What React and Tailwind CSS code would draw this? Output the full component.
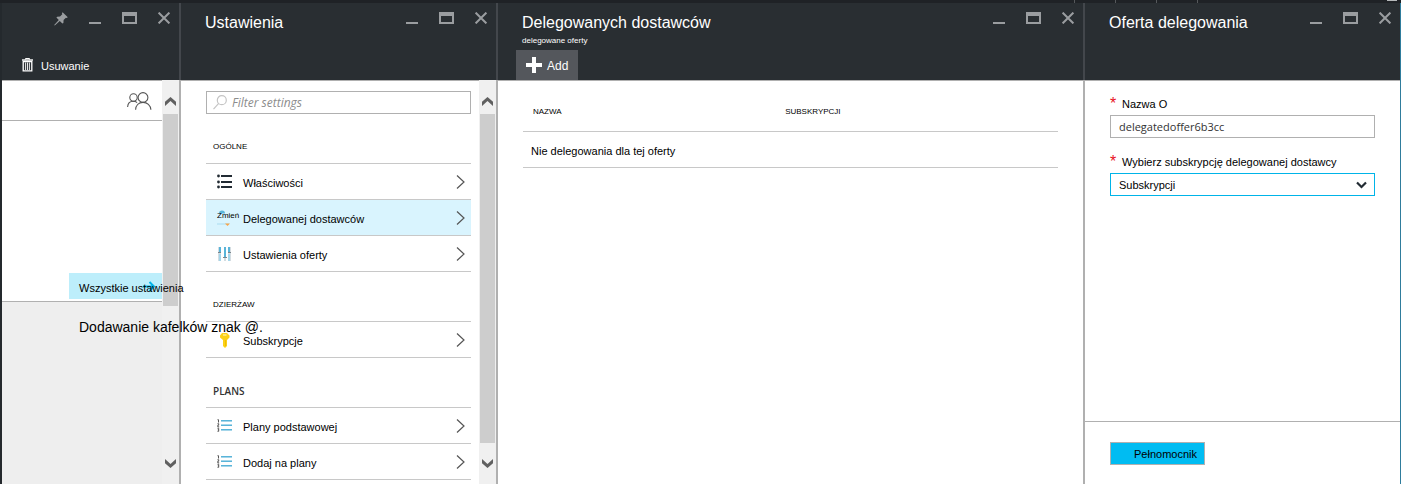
import React from "react";

const PinIcon = () => (
  <svg width="14" height="14" viewBox="0 0 14 14" fill="currentColor" aria-hidden="true">
    <path d="M8.6 0.2 13.8 5.2 12.6 6 11.9 5.7 9.6 8.1 9.4 10.9 8.4 11.6 5.8 9 0.8 13.6 0.2 13.1 4.8 8 2.4 5.6 3.2 4.7 6 4.5 8.3 2.2 7.9 1.2z" />
  </svg>
);

const MinimizeIcon = () => (
  <svg width="12" height="12" viewBox="0 0 12 12" aria-hidden="true">
    <rect x="0" y="10" width="12" height="2" fill="currentColor" />
  </svg>
);

const MaximizeIcon = () => (
  <svg width="15" height="12" viewBox="0 0 15 12" aria-hidden="true">
    <path d="M0 0h15v12H0zM2 4v6h11V4z" fill="currentColor" fillRule="evenodd" />
  </svg>
);

const CloseIcon = () => (
  <svg width="12" height="12" viewBox="0 0 12 12" aria-hidden="true">
    <path d="M0.6 0.6 11.4 11.4M11.4 0.6 0.6 11.4" stroke="currentColor" strokeWidth="2" fill="none" />
  </svg>
);

const TrashIcon = () => (
  <svg width="11" height="14" viewBox="0 0 11 14" fill="none" stroke="#fff" aria-hidden="true">
    <path d="M0 2h11" strokeWidth="1.4" />
    <path d="M3.5 1.5v-1h4v1" />
    <path d="M1.2 3.5h8.6v9.3H1.2z" strokeWidth="1.3" />
    <path d="M3.6 4.5v7.5M5.5 4.5v7.5M7.4 4.5v7.5" strokeWidth="0.9" />
  </svg>
);

const PlusIcon = () => (
  <svg width="16" height="16" viewBox="0 0 16 16" aria-hidden="true">
    <path d="M6 0h4v6h6v4h-6v6H6v-6H0V6h6z" fill="#fff" />
  </svg>
);

const PeopleIcon = () => (
  <svg width="25" height="18" viewBox="0 0 25 18" fill="none" stroke="#555" strokeWidth="1.1" aria-hidden="true">
    <circle cx="6.5" cy="5.5" r="3.7" />
    <path d="M0.6 15C0.8 11.5 3 9.3 6.3 9.3c1.6 0 2.7.4 3.8 1.3" />
    <circle cx="16" cy="5.5" r="4.9" />
    <path d="M8.6 17.8c.2-4.6 3.2-7.4 7.4-7.4s7.6 2.8 7.9 7.4" />
  </svg>
);

const SearchIcon = () => (
  <svg width="14" height="15" viewBox="0 0 14 15" fill="none" stroke="#c4c4c4" strokeWidth="1.2" aria-hidden="true">
    <circle cx="8.8" cy="5.2" r="4.5" />
    <path d="M5.7 8.4 0.5 14.2" />
  </svg>
);

const RowChevron = () => (
  <svg width="9" height="14" viewBox="0 0 9 14" fill="none" stroke="#555" strokeWidth="1.2" aria-hidden="true">
    <path d="M1 0.5 8 7 1 13.5" />
  </svg>
);

const ScrollChevron = ({ down }) => (
  <svg width="11" height="9" viewBox="0 0 11 9" aria-hidden="true">
    <path
      d={down ? "M0 0 5.5 5 11 0V4.2L5.5 9 0 4.2z" : "M0 9 5.5 4 11 9V4.8L5.5 0 0 4.8z"}
      fill="#606060"
    />
  </svg>
);

const BulletsIcon = () => (
  <svg width="16" height="15" viewBox="0 0 16 15" fill="#222b33" aria-hidden="true">
    <circle cx="1.5" cy="2" r="1.4" />
    <circle cx="1.5" cy="8" r="1.4" />
    <circle cx="1.5" cy="13" r="1.4" />
    <path d="M4 1h11v2H4zM4 7h11v2H4zM4 12h11v2H4z" />
  </svg>
);

const ProviderIcon = () => (
  <svg width="16" height="16" viewBox="0 0 16 16" aria-hidden="true">
    <path d="M2 3.5a3 3 0 0 1 6 0z" fill="#59b4d9" />
    <path d="M0 14h12" stroke="#a9dcf0" />
    <path d="M8 13.5h5l-2.5 2.5z" fill="#f7a44a" />
  </svg>
);

const SlidersIcon = () => (
  <svg width="16" height="16" viewBox="0 0 16 16" aria-hidden="true">
    <path d="M1 1h3v14H1zM7 1h2v14H7zM11 1h3v14h-3z" fill="#d4dde2" />
    <path d="M2 8h2v7H2zM11 8h2v7h-2z" fill="#a5d6ea" />
    <path d="M2 1h2v5H2zM7 1h2v10H7zM11 1h2v5h-2z" fill="#59b4d9" />
    <path d="M1 6h3v1H1zM6 11h4v1H6zM11 6h3v1h-3z" fill="#7a858c" />
  </svg>
);

const KeyIcon = () => (
  <svg width="16" height="16" viewBox="0 0 16 16" aria-hidden="true">
    <path d="M5 1h5l2.5 2.5v2L10 8v6l-2 2-2-2V8L3 5.5v-2z" fill="#fcd116" />
    <path d="M6 3h3.5" stroke="#fff3b0" strokeWidth="1.2" />
    <path d="M8.5 8v6" stroke="#e8b800" strokeWidth="0.8" />
  </svg>
);

const NumberedIcon = () => (
  <svg width="16" height="13" viewBox="0 0 16 13" aria-hidden="true">
    <path
      d="M0.5 0.7h1v2.800M0.5 4.700h1.200v1.500H0.800v1.700H2.200M0.500 9.300h1.200v3H0.500M0.800 10.800h1"
      stroke="#555"
      fill="none"
    />
    <path d="M4 1h11v1H4zM4 6h11v1H4zM4 10h11v1H4z" fill="#59b4d9" />
    <path d="M4 2h11v1H4zM4 5h11v1H4zM4 11h11v1H4z" fill="#a5d6ea" />
  </svg>
);

function WindowControls({ pin }) {
  return (
    <div className="flex shrink-0 items-start gap-[21px] pt-[9px] text-[#9a9da0]">
      {pin && (
        <button type="button" aria-label="Przypnij">
          <PinIcon />
        </button>
      )}
      <button type="button" aria-label="Minimalizuj">
        <MinimizeIcon />
      </button>
      <button type="button" aria-label="Maksymalizuj">
        <MaximizeIcon />
      </button>
      <button type="button" aria-label="Zamknij">
        <CloseIcon />
      </button>
    </div>
  );
}

function Blade({ title, subtitle, command, pin, last, className, children }) {
  return (
    <section className={`flex flex-col ${className}`}>
      <header
        className={`flex h-[77px] shrink-0 flex-col justify-between bg-[#292e32] text-white ${
          last ? "" : "border-r-2 border-[#43474c]"
        }`}
      >
        <div className="flex justify-between pr-[9px]">
          <div className="pl-6">
            {title && <h2 className="pt-2.5 text-base leading-5 whitespace-nowrap">{title}</h2>}
            {subtitle && <p className="text-[8px] leading-4">{subtitle}</p>}
          </div>
          <WindowControls pin={pin} />
        </div>
        {command}
      </header>
      <div className={`flex flex-1 ${last ? "" : "border-r-2 border-[#b0b0b0]"}`}>{children}</div>
    </section>
  );
}

function Scrollbar({ thumb }) {
  return (
    <div className="flex w-[17px] shrink-0 flex-col bg-[#f0f0f0]">
      <button type="button" aria-label="Przewiń w górę" className="flex h-[34px] items-center justify-center pt-2">
        <ScrollChevron />
      </button>
      <div className={`mx-px bg-[#cdcdcd] ${thumb}`} />
      <button
        type="button"
        aria-label="Przewiń w dół"
        className="mt-auto flex h-[41px] items-center justify-center"
      >
        <ScrollChevron down />
      </button>
    </div>
  );
}

const groups = [
  {
    title: "OGÓLNE",
    items: [
      { label: "Właściwości", Icon: BulletsIcon },
      { label: "Delegowanej dostawców", Icon: ProviderIcon, active: true, tag: "Zmień" },
      { label: "Ustawienia oferty", Icon: SlidersIcon },
    ],
  },
  { title: "DZIERŻAW", items: [{ label: "Subskrypcje", Icon: KeyIcon }] },
  {
    title: "PLANS",
    semibold: true,
    items: [
      { label: "Plany podstawowej", Icon: NumberedIcon },
      { label: "Dodaj na plany", Icon: NumberedIcon },
    ],
  },
];

function SettingsRow({ label, Icon, active, tag }) {
  return (
    <li>
      <a
        href="#"
        className={`flex h-9 items-center border-b border-[#c8c8c8] pr-1.5 pl-[11px] ${active ? "bg-[#d9f4fe]" : ""}`}
      >
        <span className="relative flex w-[26px] shrink-0">
          <Icon />
          {tag && <span className="absolute top-0 left-0 text-[8px] leading-3">{tag}</span>}
        </span>
        <span className="flex-1 pt-0.5 leading-4">{label}</span>
        <RowChevron />
      </a>
    </li>
  );
}

function Field({ id, label, children }) {
  return (
    <div className="flex flex-col gap-[3px]">
      <label htmlFor={id} className="flex leading-4 whitespace-nowrap">
        <span className="w-3 text-base leading-4 text-[#e81123]">*</span>
        {label}
      </label>
      {children}
    </div>
  );
}

export default function App() {
  return (
    <div className="flex min-h-screen flex-col bg-[#1f2327] font-['Liberation_Sans',Arial,sans-serif] text-[11px] text-black">
      <div className="flex h-[3px] justify-end overflow-hidden bg-[#1f2226] pr-1">
        <span className="w-[41px] border-l border-[#55585b]" />
        <span className="w-[41px] border-l border-[#55585b]" />
        <span className="w-[41px] border-l border-[#55585b]" />
        <span className="w-[190px] border-l border-[#55585b]" />
        <span className="h-px w-2.5 bg-[#b5b8ba]" />
      </div>
      <main className="flex flex-1 border-r border-[#2f7c9c] bg-white">
        <div className="w-0.5 shrink-0 bg-[#24292d]" />

        <Blade
          pin
          className="relative z-10 w-[179px] shrink-0"
          command={
            <button type="button" className="flex items-center gap-2 self-start pb-1.5 pl-5 leading-4">
              <TrashIcon />
              <span className="pt-0.5">Usuwanie</span>
            </button>
          }
        >
          <div className="flex w-40 shrink-0 flex-col border-t border-[#b0b0b0]">
            <div className="flex h-10 items-center justify-end border-b border-[#b0b0b0] pr-2.5">
              <PeopleIcon />
            </div>
            <div className="flex h-[181px] items-end justify-end border-b border-[#b0b0b0] pb-0.5">
              <a href="#" className="relative flex h-[26px] w-[93px] items-center bg-[#bdeefb] pt-1 pl-2.5">
                <svg
                  className="absolute top-2 right-1.5"
                  width="13"
                  height="11"
                  viewBox="0 0 13 11"
                  fill="none"
                  stroke="#00b4e8"
                  strokeWidth="2"
                  aria-hidden="true"
                >
                  <path d="M0 5.5h11M6.5 1l4.5 4.5L6.5 10" />
                </svg>
                <span className="relative z-10 whitespace-nowrap">Wszystkie ustawienia</span>
              </a>
            </div>
            <div className="flex-1 bg-[#eee] pt-4 pl-[77px]">
              <p className="relative z-10 text-sm leading-[18px] whitespace-nowrap">Dodawanie kafelków znak @.</p>
            </div>
          </div>
          <Scrollbar thumb="h-48" />
        </Blade>

        <Blade title="Ustawienia" className="w-[317px] shrink-0">
          <div className="flex-1 border-t border-[#b0b0b0] pt-2.5 pr-2 pl-[25px]">
            <label className="flex h-[23px] items-center gap-[5px] border border-[#b0b0b0] px-1.5">
              <SearchIcon />
              <input
                type="search"
                aria-label="Filter settings"
                placeholder="Filter settings"
                className="min-w-0 flex-1 font-['Open_Sans',sans-serif] text-xs italic outline-none placeholder:text-[#8c8c8c]"
              />
            </label>
            {groups.map((group) => (
              <section key={group.title}>
                <h3
                  className={`flex h-[50px] items-end border-b border-[#c8c8c8] pb-2 pl-[7px] leading-4 ${
                    group.semibold
                      ? "font-['Open_Sans',sans-serif] text-[10px] font-semibold text-[#333]"
                      : "text-[8px]"
                  }`}
                >
                  {group.title}
                </h3>
                <ul>
                  {group.items.map((item) => (
                    <SettingsRow key={item.label} {...item} />
                  ))}
                </ul>
              </section>
            ))}
          </div>
          <Scrollbar thumb="flex-1" />
        </Blade>

        <Blade
          title="Delegowanych dostawców"
          subtitle="delegowane oferty"
          className="min-w-0 flex-1"
          command={
            <button
              type="button"
              className="ml-[18px] flex h-[30px] items-center gap-[5px] self-start bg-[#54575c] px-2.5 text-xs"
            >
              <PlusIcon />
              <span className="pt-0.5">Add</span>
            </button>
          }
        >
          <div className="flex-1 border-t border-[#b0b0b0] px-[25px]">
            <table className="w-full table-fixed text-left">
              <thead>
                <tr className="h-[50px] border-b border-[#c8c8c8] text-[8px]">
                  <th className="w-[49%] pt-3 pl-2.5 font-normal">NAZWA</th>
                  <th className="pt-3 font-normal">SUBSKRYPCJI</th>
                </tr>
              </thead>
              <tbody>
                <tr className="h-9 border-b border-[#c8c8c8]">
                  <td colSpan={2} className="pt-1 pl-2">
                    Nie delegowania dla tej oferty
                  </td>
                </tr>
              </tbody>
            </table>
          </div>
        </Blade>

        <Blade title="Oferta delegowania" last className="w-[315px] shrink-0">
          <form className="flex flex-1 flex-col border-t border-[#b0b0b0]" onSubmit={(e) => e.preventDefault()}>
            <div className="flex flex-1 flex-col gap-4 px-[25px] pt-[15px]">
              <Field id="offer-name" label="Nazwa O">
                <input
                  id="offer-name"
                  type="text"
                  defaultValue="delegatedoffer6b3cc"
                  className="h-[23px] w-full border border-[#b0b0b0] px-2 font-['Open_Sans',sans-serif] text-[#333] outline-none"
                />
              </Field>
              <Field id="subscription" label="Wybierz subskrypcję delegowanej dostawcy">
                <div className="relative">
                  <select
                    id="subscription"
                    className="block h-[23px] w-full appearance-none border border-[#00b4e8] bg-white px-2 pt-0.5 outline-none"
                  >
                    <option>Subskrypcji</option>
                  </select>
                  <svg
                    className="pointer-events-none absolute top-2 right-2"
                    width="11"
                    height="8"
                    viewBox="0 0 11 8"
                    fill="none"
                    stroke="#222b33"
                    strokeWidth="2.2"
                    aria-hidden="true"
                  >
                    <path d="M1 1.5 5.5 6 10 1.5" />
                  </svg>
                </div>
              </Field>
            </div>
            <div className="flex h-[63px] items-center border-t border-[#b0b0b0] px-[25px]">
              <button
                type="submit"
                className="h-[23px] w-[95px] border border-[#b0b0b0] bg-[#00bcf2] pt-0.5 pl-[23px] text-left"
              >
                Pełnomocnik
              </button>
            </div>
          </form>
        </Blade>
      </main>
    </div>
  );
}
